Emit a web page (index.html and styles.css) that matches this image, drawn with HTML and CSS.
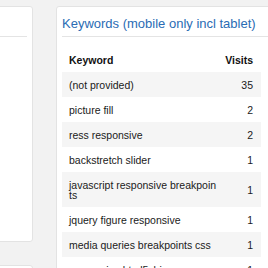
FILE: index.html
```html
<!DOCTYPE html>
<html lang="en">
<head>
<meta charset="utf-8">
<title>Keywords</title>
<link rel="stylesheet" href="styles.css">
</head>
<body>
<div class="layout">
  <div class="side">
    <section class="card card-tall">
      <div class="card-head"><h2 class="card-title">&nbsp;</h2></div>
    </section>
    <section class="card card-next">
      <div class="card-head"><h2 class="card-title">&nbsp;</h2></div>
    </section>
  </div>
  <section class="card card-main">
    <div class="card-head"><h2 class="card-title">Keywords (mobile only incl tablet)</h2></div>
    <table class="kw-table">
      <colgroup><col class="col-kw"><col class="col-visits"></colgroup>
      <thead>
        <tr><th class="kw">Keyword</th><th class="num">Visits</th></tr>
      </thead>
      <tbody>
        <tr><td class="kw">(not provided)</td><td class="num">35</td></tr>
        <tr><td class="kw">picture fill</td><td class="num">2</td></tr>
        <tr><td class="kw">ress responsive</td><td class="num">2</td></tr>
        <tr><td class="kw">backstretch slider</td><td class="num">1</td></tr>
        <tr><td class="kw">javascript responsive breakpoints</td><td class="num">1</td></tr>
        <tr><td class="kw">jquery figure responsive</td><td class="num">1</td></tr>
        <tr><td class="kw">media queries breakpoints css</td><td class="num">1</td></tr>
        <tr><td class="kw">responsive html5shiv</td><td class="num">1</td></tr>
      </tbody>
    </table>
  </section>
</div>
</body>
</html>
```
FILE: styles.css
```css
html, body {
  margin: 0;
  padding: 0;
  background: #f2f2f2;
  overflow: hidden;
  font-family: "Liberation Sans", Arial, sans-serif;
  color: #1a1a1a;
}

.layout {
  display: flex;
  align-items: flex-start;
  gap: 23px;
  padding-top: 6px;
  margin-left: -40px;
}

.side {
  display: flex;
  flex-direction: column;
  gap: 23px;
  width: 73px;
  flex: none;
}

.card {
  background: #fff;
  border: 1px solid #e3e3e3;
  border-radius: 3px;
  padding: 0 5px;
  box-sizing: border-box;
}

.card-tall { height: 236px; }
.card-next { height: 60px; }

.card-main {
  width: 218px;
  flex: none;
}

.card-head {
  padding: 8px 0 4px;
  border-bottom: 1px solid #e4e4e4;
}

.card-title {
  margin: 0;
  font-size: 13px;
  line-height: 17px;
  font-weight: normal;
  color: #2a6cb4;
  white-space: nowrap;
}

.kw-table {
  width: 199px;
  margin-top: 10px;
  border-collapse: collapse;
  table-layout: fixed;
  font-size: 10.5px;
  line-height: 10px;
}

.col-kw { width: 161px; }
.col-visits { width: 38px; }

.kw-table th,
.kw-table td {
  padding: 7.5px 0;
  vertical-align: middle;
}

.kw-table th {
  font-weight: bold;
  color: #111;
}

.kw-table .kw {
  text-align: left;
  padding-left: 7px;
  padding-right: 6px;
  word-break: break-all;
}

.kw-table .num {
  text-align: right;
  padding-right: 8px;
}

.kw-table tbody tr:nth-child(odd) {
  background: #f5f5f5;
}
```
